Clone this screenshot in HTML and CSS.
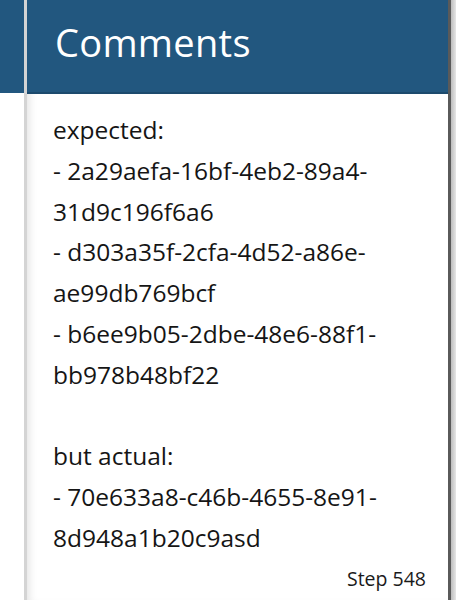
FILE: index.html
```html
<!DOCTYPE html>
<html>
<head>
<meta charset="utf-8">
<link rel="stylesheet" href="styles.css">
</head>
<body>
<div class="page">
  <div class="side">
    <div class="side-top"></div>
  </div>
  <div class="divider"></div>
  <div class="card">
    <div class="card-header"><h1 class="title">Comments</h1></div>
    <div class="card-body">
      <p class="comment">expected:
- 2a29aefa-16bf-4eb2-89a4-31d9c196f6a6
- d303a35f-2cfa-4d52-a86e-ae99db769bcf
- b6ee9b05-2dbe-48e6-88f1-bb978b48bf22

but actual:
- 70e633a8-c46b-4655-8e91-8d948a1b20c9asd</p>
      <div class="step">Step 548</div>
    </div>
  </div>
  <div class="edge"></div>
</div>
</body>
</html>
```
FILE: styles.css
```css
html, body {
  margin: 0;
  padding: 0;
  background: #ffffff;
}
body {
  font-family: "Open Sans", "Noto Sans", sans-serif;
  width: 456px;
  height: 600px;
  overflow: hidden;
}
.page {
  display: flex;
  height: 600px;
}
.side {
  width: 24px;
  flex: none;
  background: #fff;
}
.side-top {
  height: 93px;
  background: #22577f;
}
.divider {
  width: 3px;
  flex: none;
  background: #d4d4d4;
}
.card {
  flex: 1;
  display: flex;
  flex-direction: column;
  background: #fff;
  box-shadow: inset 8px 0 8px -6px rgba(0,0,0,0.12);
}
.card-header {
  height: 92px;
  background: #22577f;
  border-bottom: 2px solid #1c4a6d;
  display: flex;
  align-items: center;
  padding-left: 28px;
}
.title {
  margin: 0;
  color: #fff;
  font-weight: 400;
  font-size: 38px;
  letter-spacing: 0.3px;
  line-height: 1;
  margin-top: -9px;
}
.card-body {
  flex: 1;
  display: flex;
  flex-direction: column;
  padding: 16px 22px 0 26px;
}
.comment {
  margin: 0;
  white-space: pre-line;
  font-size: 24.5px;
  line-height: 40.8px;
  color: #151515;
}
.step {
  margin-top: auto;
  align-self: flex-end;
  font-size: 19.5px;
  color: #1a1a1a;
  padding-bottom: 8px;
}
.edge {
  width: 8px;
  flex: none;
  background: linear-gradient(to right, #5a5a5a 0, #5a5a5a 3px, #bdbdbd 3px, #e6e6e6 100%);
}
```
